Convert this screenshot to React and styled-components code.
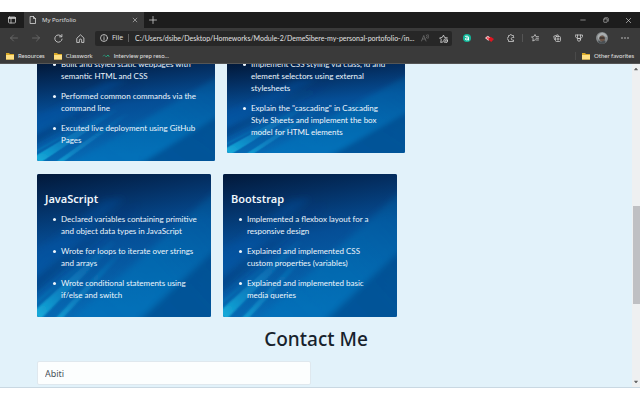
import React, { useId } from "react";
import styled, { createGlobalStyle } from "styled-components";

const GlobalStyle = createGlobalStyle`
  * { box-sizing: border-box; }
  body {
    margin: 0;
    background: #fff;
    font-family: "Open Sans", "Noto Sans", sans-serif;
  }
  button, input { font: inherit; color: inherit; }
`;

const Screen = styled.div`
  display: flex;
  flex-direction: column;
  height: 100vh;
  padding: 12px 0;
  overflow: hidden;
`;

const Bar = styled.div`
  display: flex;
  align-items: center;
  flex: none;
  color: #e2e2e2;
  background: #3a3a3a;
  font-size: 6px;
  white-space: nowrap;
`;

const TabStrip = styled(Bar)`
  height: 16px;
  background: #1d1d1d;
`;

const Tab = styled.div`
  display: flex;
  align-items: center;
  align-self: stretch;
  gap: 5px;
  width: 120px;
  padding: 0 5px 0 5px;
  background: #3a3a3a;
`;

const TabTitle = styled.span`
  flex: 1;
`;

const IconButton = styled.button`
  display: flex;
  align-items: center;
  justify-content: center;
  flex: none;
  width: ${(p) => p.$width || 22}px;
  height: 14px;
  padding: 0;
  border: 0;
  background: none;
  color: ${(p) => (p.$dim ? "#737373" : "#d6d6d6")};
`;

const WindowControls = styled.div`
  display: flex;
  margin-left: auto;
`;

const Toolbar = styled(Bar)`
  height: 20px;
  padding: 0 4px 0 3px;
`;

const Address = styled.div`
  display: flex;
  align-items: center;
  flex: 1;
  min-width: 0;
  height: 15px;
  margin: 0 4px;
  padding-left: 5px;
  border-radius: 2px;
  background: #272727;
`;

const Scheme = styled.span`
  margin: 0 6px 0 4px;
  padding-right: 5px;
  border-right: 1px solid #606060;
  line-height: 8px;
  font-size: 7px;
`;

const AddressInput = styled.input`
  flex: 1;
  min-width: 0;
  padding: 0;
  border: 0;
  outline: 0;
  background: none;
  font-family: Lato, sans-serif;
  font-size: 7px;
  text-overflow: ellipsis;
`;

const Divider = styled.span`
  width: 1px;
  height: 8px;
  background: #555;
`;

const Bookmarks = styled(Bar)`
  height: 16px;
  padding: 0 6px;
  gap: 9px;
  border-bottom: 1px solid #555;
  font-family: Lato, sans-serif;
`;

const Bookmark = styled.a`
  display: flex;
  align-items: center;
  gap: 4px;
  margin-left: ${(p) => (p.$end ? "auto" : "0")};
  padding-left: ${(p) => (p.$end ? "6px" : "0")};
  border-left: ${(p) => (p.$end ? "1px solid #4a4a4a" : "0")};
  color: inherit;
  text-decoration: none;
`;

const Viewport = styled.div`
  display: flex;
  flex: 1;
  min-height: 0;
  border-bottom: 1px solid #c9d8e2;
  background: #e2f2fa;
`;

const Page = styled.main`
  flex: 1;
  min-width: 0;
  padding: 0 0 3px 37px;
  overflow: hidden;
`;

const CardRow = styled.div`
  display: flex;
  align-items: flex-start;
  gap: 12px;
  margin-bottom: 13px;
`;

const Card = styled.section`
  position: relative;
  flex: 0 1 ${(p) => (p.$clipped ? 178 : 174)}px;
  padding: ${(p) => (p.$clipped ? "0 8px 15px" : "15px 8px 16px")};
  overflow: hidden;
  border-radius: ${(p) => (p.$clipped ? "0 0 2px 2px" : "2px")};
  background: #044a8e;
  color: #eef6fc;
  font-family: Lato, "Open Sans", sans-serif;
`;

const Artwork = styled.svg`
  position: absolute;
  inset: 0;
  width: 100%;
  height: 100%;
`;

const CardTitle = styled.h2`
  position: relative;
  margin: 0 0 4px;
  font-family: "Noto Sans", sans-serif;
  font-size: 11px;
  font-weight: 600;
  line-height: 20px;
`;

const SkillList = styled.ul`
  position: relative;
  display: grid;
  gap: 8px;
  margin: ${(p) => (p.$clipped ? "-6px" : "0")} 0 0;
  padding: 0 0 0 16px;
  list-style: none;
  font-size: 8px;
  line-height: 12px;
`;

const Skill = styled.li`
  position: relative;

  &::before {
    content: "";
    position: absolute;
    top: 5px;
    left: -8px;
    width: 3px;
    height: 3px;
    border-radius: 50%;
    background: #eef6fc;
  }
`;

const Line = styled.span`
  display: block;
  white-space: nowrap;
`;

const Heading = styled.h1`
  margin: -5px 0 8px -37px;
  color: #17222c;
  font-family: "Noto Sans", sans-serif;
  font-size: 19px;
  font-weight: 500;
  line-height: 28px;
  text-align: center;
`;

const NameInput = styled.input`
  display: block;
  width: 46%;
  height: 24px;
  padding: 0 7px;
  border: 1px solid #dfe8ee;
  border-radius: 2px;
  outline: 0;
  background: #fcfefe;
  color: #49525a;
  font-family: "Noto Sans", sans-serif;
  font-size: 9px;
`;

const ScrollTrack = styled.div`
  display: flex;
  flex-direction: column;
  align-items: center;
  width: 8px;
  padding: 3px 0;
  background: #eef0f1;
  color: #444;
`;

const ScrollThumb = styled.div`
  width: 7px;
  height: 31%;
  background: #bfc0c3;
`;

const ScrollSpace = styled.div`
  flex: ${(p) => p.$share};
`;

const Icon = ({ size = 8, children }) => (
  <svg width={size} height={size} viewBox="0 0 16 16" fill="none" stroke="currentColor" strokeWidth="1.5" strokeLinecap="round" strokeLinejoin="round" aria-hidden="true">
    {children}
  </svg>
);

const icons = {
  workspaces: <><rect x="1" y="2" width="14" height="12" rx="2" /><path d="M1 4h14" strokeWidth="3" /><path d="M6 5v9" /></>,
  file: <path d="M3 1h6l4 4v10H3zM9 1v4h4" />,
  close: <path d="M3 3l10 10M13 3L3 13" />,
  plus: <path d="M8 1v14M1 8h14" />,
  minimize: <path d="M2 8h12" />,
  restore: <><rect x="2" y="5" width="9" height="9" rx="1" /><path d="M5 2h7q2 0 2 2v7" /></>,
  back: <path d="M15 8H1M7 2L1 8l6 6" />,
  forward: <path d="M1 8h14M9 2l6 6-6 6" />,
  reload: <path d="M13 4a6.5 6.5 0 1 0 1.4 5M14 1v4h-4" />,
  home: <path d="M2 7l6-5.500L14 7v8h-4v-4a2 2 0 0 0-4 0v4H2z" />,
  info: <><circle cx="8" cy="8" r="7" /><path d="M8 7v5M8 4v.5" /></>,
  readAloud: <><path d="M1 14L5.500 3 10 14M3 10h5" /><path d="M11 2q3 3 0 6M14 1q3 4 0 8" /></>,
  starAdd: <><path d="M7 14l-4 1 1-5-3-3 4.500-.7L8 2l2 4.300 5 .7" /><circle cx="12" cy="12" r="3.500" /><path d="M12 10.500v3M10.500 12h3" strokeWidth="1" /></>,
  puzzle: <path d="M13 5V3H9.500a2 2 0 0 0-4 0H3v3.500a2.500 2.500 0 0 0 0 5V15h10v-3h-2a2.500 2.500 0 0 1 0-5h2z" />,
  favorites: <><path d="M9 11.500L3.500 14l1-5L1 6l4.500-.7L8 1l2 4.300H15" /><path d="M10 8.500h5M11 12h4" /></>,
  collections: <><path d="M3 11L1.500 4.500 10 1.500l1 3" /><rect x="5" y="5" width="10" height="10" rx="2" /><path d="M10 7.500v5M7.500 10h5" /></>,
  rewards: <><path d="M1 2h14v3l-3 4H4L1 5zM5 2v5M11 2v5" /><circle cx="8" cy="11.500" r="3" /></>,
  more: <g fill="currentColor" stroke="none"><circle cx="2" cy="8" r="1.500" /><circle cx="8" cy="8" r="1.500" /><circle cx="14" cy="8" r="1.500" /></g>,
  teal: <g stroke="none"><circle cx="8" cy="8" r="8" fill="#13b99b" /><path d="M5 4.500q6-1.500 6 2V12M11 8H7q-3 .5-2 3 2 2 6 0" fill="none" stroke="#fff" strokeWidth="2" /></g>,
  redTag: <g stroke="none"><path d="M0 7l5-4 5 4-4 5z" fill="#f4dfe0" /><path d="M5 9l5-4 6 4-5 5z" fill="#e01520" /><path d="M3 4l4 2v4L3 9z" fill="#ee5963" /></g>,
  avatar: <g stroke="none"><circle cx="8" cy="8" r="8" fill="#85898b" /><path d="M2 6q2-5 7-5 5 1 6 6l-3-1-3-2-4 3-2 3z" fill="#a9adae" /><path d="M5 6q3-3 6 0l1 4-3 4-4-3z" fill="#6b5548" /><path d="M3 11l4 2 5-2 1 3q-5 4-10 0z" fill="#4a5054" /><path d="M5 8h6" stroke="#222" strokeWidth="1.500" /></g>,
  folder: <g stroke="none"><path d="M0 2h6l2 2h8v11H0z" fill="#d9a928" /><path d="M0 6h16v9H0z" fill="#ffe083" /></g>,
  link: <g strokeWidth="2"><path d="M2 8l3-2 2 3" stroke="#317f6c" /><path d="M9 9l3-3 2 3" stroke="#24ae82" /></g>,
  up: <path d="M2 11l6-7 6 7z" fill="currentColor" />,
  down: <path d="M2 5l6 7 6-7z" fill="currentColor" />,
};

function LightBeams() {
  const id = useId().replace(/[^a-zA-Z0-9]/g, "");
  const url = (name) => `url(#${id}${name})`;
  return (
    <Artwork viewBox="0 0 174 143" preserveAspectRatio="none" aria-hidden="true">
      <defs>
        <linearGradient id={`${id}base`} x1="0" y1="0" x2=".2" y2="1">
          <stop offset="0" stopColor="#02193a" />
          <stop offset=".22" stopColor="#042f62" />
          <stop offset=".5" stopColor="#054e96" />
          <stop offset="1" stopColor="#066ab4" />
        </linearGradient>
        <linearGradient id={`${id}wide`} gradientUnits="userSpaceOnUse" x1="20" y1="143" x2="165" y2="10">
          <stop offset="0" stopColor="#0a78c0" stopOpacity=".5" />
          <stop offset=".55" stopColor="#0770b6" stopOpacity=".6" />
          <stop offset="1" stopColor="#0768ac" stopOpacity=".35" />
        </linearGradient>
        <linearGradient id={`${id}beam`} gradientUnits="userSpaceOnUse" x1="5" y1="143" x2="86" y2="66">
          <stop offset="0" stopColor="#14b0dc" stopOpacity=".9" />
          <stop offset=".3" stopColor="#1592cc" stopOpacity=".6" />
          <stop offset="1" stopColor="#0c80c4" stopOpacity="0" />
        </linearGradient>
        <linearGradient id={`${id}shade`} gradientUnits="userSpaceOnUse" x1="0" y1="120" x2="110" y2="30">
          <stop offset="0" stopColor="#022b66" stopOpacity=".4" />
          <stop offset="1" stopColor="#022b66" stopOpacity="0" />
        </linearGradient>
        <filter id={`${id}soft`} x="-20%" y="-20%" width="140%" height="140%">
          <feGaussianBlur stdDeviation="3" />
        </filter>
        <filter id={`${id}edge`} x="-20%" y="-20%" width="140%" height="140%">
          <feGaussianBlur stdDeviation="1" />
        </filter>
      </defs>
      <rect width="174" height="143" fill={url("base")} />
      <g filter={url("soft")}>
        <path d="M30 150L184 12V150z" fill={url("wide")} />
        <path d="M-8 84L67 26 88 24-8 108z" fill="#0656a8" opacity=".3" />
        <path d="M-8 108L105 21 116 24-8 124z" fill={url("shade")} />
        <path d="M98 150L184 70v80z" fill="#024486" opacity=".6" />
      </g>
      <g filter={url("edge")}>
        <path d="M-2 136L75 66 79 69 4 145H-2z" fill={url("beam")} />
        <path d="M18 145L86 72 90 75 25 145z" fill={url("beam")} />
        <path d="M-2 128L60 75 62 78-2 131z" fill={url("beam")} opacity=".25" />
      </g>
    </Artwork>
  );
}

function SkillCard({ title, skills, clipped }) {
  return (
    <Card $clipped={clipped}>
      <LightBeams />
      {title && <CardTitle>{title}</CardTitle>}
      <SkillList $clipped={clipped}>
        {skills.map((lines) => (
          <Skill key={lines[0]}>
            {lines.map((line) => <Line key={line}>{line}</Line>)}
          </Skill>
        ))}
      </SkillList>
    </Card>
  );
}

function Control({ icon, label, size, ...rest }) {
  return (
    <IconButton type="button" aria-label={label} {...rest}>
      <Icon size={size}>{icons[icon]}</Icon>
    </IconButton>
  );
}

export default function App() {
  return (
    <>
      <GlobalStyle />
      <Screen>
        <TabStrip>
          <Control icon="workspaces" label="Tab actions" $width={24} />
          <Tab>
            <Icon>{icons.file}</Icon>
            <TabTitle>My Portfolio</TabTitle>
            <Control icon="close" label="Close tab" size={6} $width={8} />
          </Tab>
          <Control icon="plus" label="New tab" size={8} $width={17} />
          <WindowControls>
            <Control icon="minimize" label="Minimize" size={6} $width={23} />
            <Control icon="restore" label="Restore" size={6} $width={23} />
            <Control icon="close" label="Close window" size={7} $width={23} />
          </WindowControls>
        </TabStrip>
        <Toolbar>
          <Control icon="back" label="Back" $dim />
          <Control icon="forward" label="Forward" $dim />
          <Control icon="reload" label="Reload" size={9} />
          <Control icon="home" label="Home" size={9} />
          <Address>
            <Icon>{icons.info}</Icon>
            <Scheme>File</Scheme>
            <AddressInput aria-label="Address" defaultValue="C:/Users/dsibe/Desktop/Homeworks/Module-2/DemeSibere-my-personal-portofolio-/in..." />
            <Control icon="readAloud" label="Read aloud" $width={18} $dim />
            <Control icon="starAdd" label="Add favorite" size={9} $width={18} />
          </Address>
          <Control icon="teal" label="Extension" />
          <Control icon="redTag" label="Shopping extension" size={9} />
          <Control icon="puzzle" label="Extensions" />
          <Divider />
          <Control icon="favorites" label="Favorites" $width={23} />
          <Control icon="collections" label="Collections" />
          <Control icon="rewards" label="Rewards" />
          <Control icon="avatar" label="Profile" size={12} $width={24} />
          <Control icon="more" label="More" />
        </Toolbar>
        <Bookmarks>
          <Bookmark href="#resources"><Icon>{icons.folder}</Icon>Resources</Bookmark>
          <Bookmark href="#classwork"><Icon>{icons.folder}</Icon>Classwork</Bookmark>
          <Bookmark href="#interview"><Icon>{icons.link}</Icon>Interview prep reso...</Bookmark>
          <Bookmark href="#favorites" $end><Icon>{icons.folder}</Icon>Other favorites</Bookmark>
        </Bookmarks>
        <Viewport>
          <Page>
            <CardRow>
              <SkillCard
                clipped
                skills={[
                  ["Built and styled static webpages with", "semantic HTML and CSS"],
                  ["Performed common commands via the", "command line"],
                  ["Excuted live deployment using GitHub", "Pages"],
                ]}
              />
              <SkillCard
                clipped
                skills={[
                  ["Implement CSS styling via class, id and", "element selectors using external", "stylesheets"],
                  ["Explain the \"cascading\" in Cascading", "Style Sheets and implement the box", "model for HTML elements"],
                ]}
              />
            </CardRow>
            <CardRow>
              <SkillCard
                title="JavaScript"
                skills={[
                  ["Declared variables containing primitive", "and object data types in JavaScript"],
                  ["Wrote for loops to iterate over strings", "and arrays"],
                  ["Wrote conditional statements using", "if/else and switch"],
                ]}
              />
              <SkillCard
                title="Bootstrap"
                skills={[
                  ["Implemented a flexbox layout for a", "responsive design"],
                  ["Explained and implemented CSS", "custom properties (variables)"],
                  ["Explained and implemented basic", "media queries"],
                ]}
              />
            </CardRow>
            <Heading>Contact Me</Heading>
            <NameInput aria-label="Name" defaultValue="Abiti" />
          </Page>
          <ScrollTrack>
            <Icon size={4}>{icons.up}</Icon>
            <ScrollSpace $share={135} />
            <ScrollThumb />
            <ScrollSpace $share={76} />
            <Icon size={4}>{icons.down}</Icon>
          </ScrollTrack>
        </Viewport>
      </Screen>
    </>
  );
}
